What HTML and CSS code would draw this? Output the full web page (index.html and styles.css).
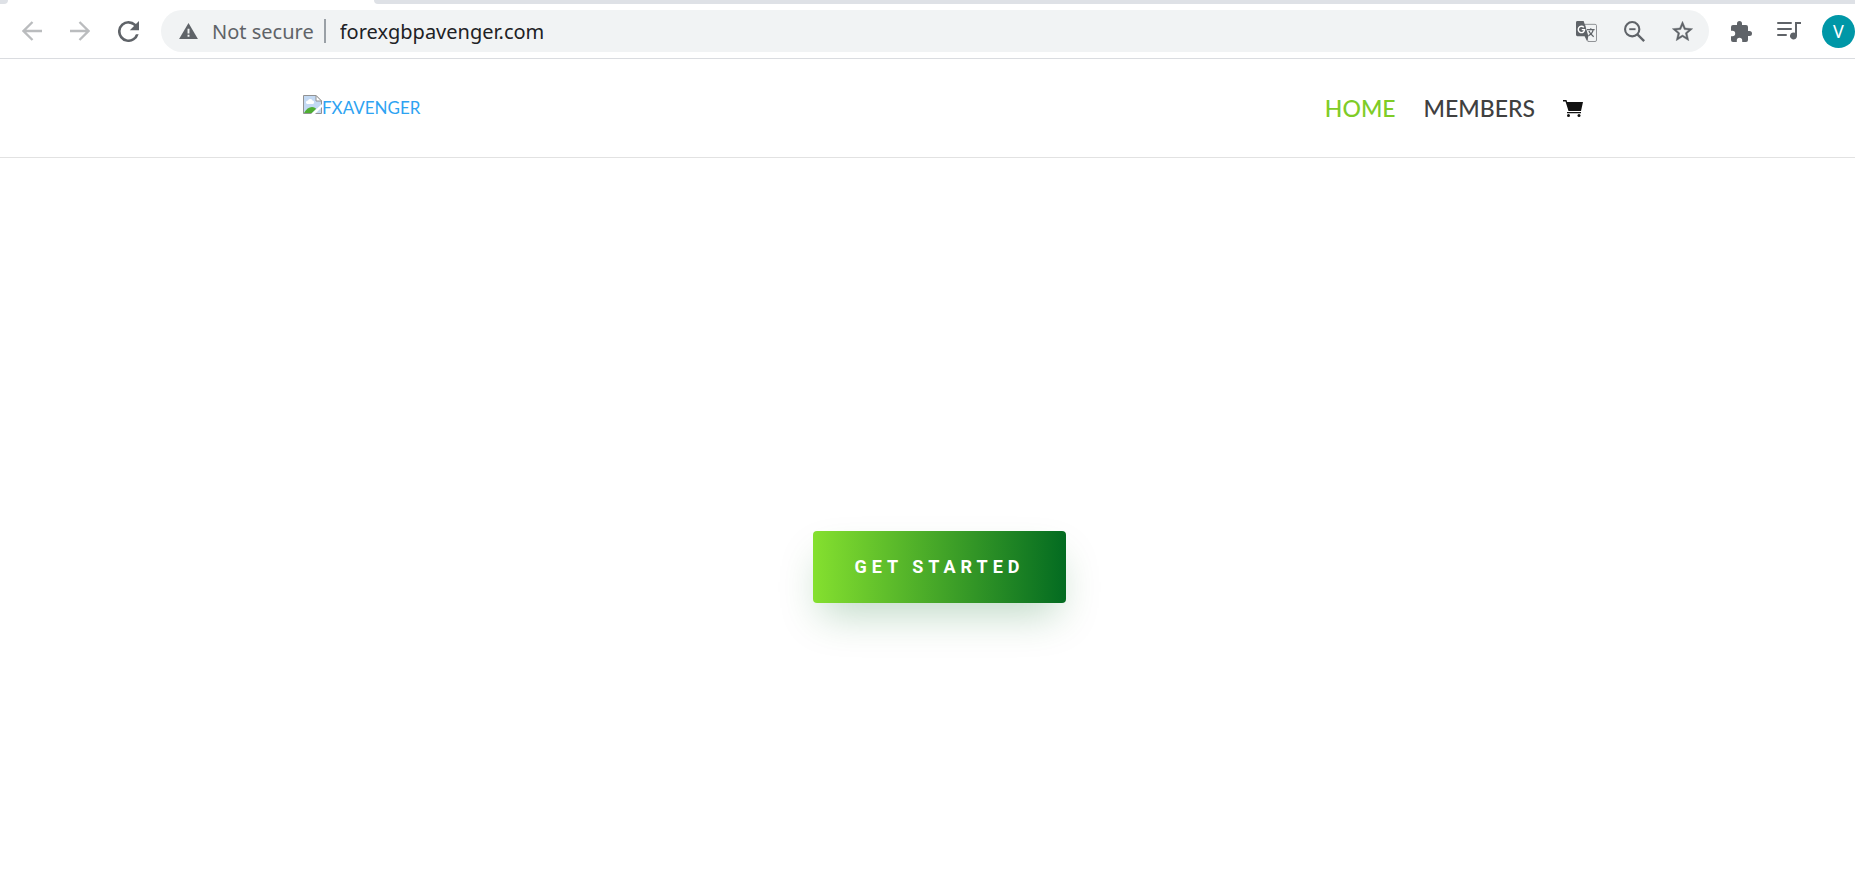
FILE: index.html
```
<!DOCTYPE html>
<html lang="en">
<head>
    <meta charset="UTF-8">
    <meta name="viewport" content="width=device-width, initial-scale=1.0">
    <title>FXAVENGER</title>
    <link rel="stylesheet" href="styles.css">
</head>
<body>
    <div class="browser">
        <div class="tabs">
            <div class="tab-before"></div>
            <div class="tab-after"></div>
        </div>
        <div class="toolbar">
            <div class="nav-buttons">
                <button class="icon-button faded" type="button" aria-label="Back">
                    <svg viewBox="0 0 20 20" fill="none" stroke="currentColor" stroke-width="2.300"><path d="M20 10H2M10.500 1L1.500 10l9 9"/></svg>
                </button>
                <button class="icon-button faded" type="button" aria-label="Forward">
                    <svg viewBox="0 0 20 20" fill="none" stroke="currentColor" stroke-width="2.300"><path d="M0 10h18M9.500 1l9 9-9 9"/></svg>
                </button>
                <button class="icon-button" type="button" aria-label="Reload">
                    <svg viewBox="4 4 16 16"><path fill="currentColor" d="M17.650 6.350A7.960 7.960 0 0 0 12 4a8 8 0 1 0 7.730 10h-2.080A6 6 0 1 1 12 6c1.660 0 3.140.690 4.220 1.780L13 11h7V4z"/></svg>
                </button>
            </div>
            <div class="address">
                <svg class="warning" viewBox="0 0 20 17"><path fill="#5f6368" d="M10 0l10 17H0z"/><path fill="#f1f3f4" d="M9 6h2v5H9zM9 12.500h2v2H9z"/></svg>
                <span class="not-secure">Not secure</span>
                <span class="divider"></span>
                <input class="url" type="text" aria-label="Address" value="forexgbpavenger.com">
                <div class="address-icons">
                    <button class="icon-button" type="button" aria-label="Translate">
                        <svg viewBox="0 0 22 22">
                            <path fill="#f1f3f4" stroke="#8a8d91" d="M9 3.500h11a1.500 1.500 0 0 1 1.500 1.500v15a1.500 1.500 0 0 1-1.500 1.500h-7.500z"/>
                            <path fill="currentColor" d="M1.500 0H8l1 3 4 13H1.500A1.500 1.500 0 0 1 0 14.500v-13A1.500 1.500 0 0 1 1.500 0zM9 16h4l-1.500 5z"/>
                            <path fill="none" stroke="#fff" stroke-width="1.500" d="M8.200 6.700A3.300 3.300 0 1 0 9 9H6"/>
                            <path fill="none" stroke="currentColor" stroke-width="1.300" d="M11.500 9h8M15.500 7.500V9M18 9c-.5 3-2.500 5-5 6.500M13.500 10.500c1 2.500 2.500 4 5 6"/>
                        </svg>
                    </button>
                    <button class="icon-button" type="button" aria-label="Zoom">
                        <svg viewBox="0 0 20 20" fill="none" stroke="currentColor" stroke-width="2"><circle cx="7.800" cy="7.800" r="6.800"/><path stroke-width="1.800" d="M5 7.800h6"/><path stroke-width="2.200" d="M12.500 12.500l6.700 6.700"/></svg>
                    </button>
                    <button class="icon-button" type="button" aria-label="Bookmark">
                        <svg viewBox="1.700 1.700 20.600 19.600"><path fill="currentColor" stroke="currentColor" stroke-width=".4" d="M22 9.240l-7.190-.620L12 2 9.190 8.630 2 9.240l5.460 4.730L5.820 21 12 17.270 18.180 21l-1.630-7.030zM12 15.400l-3.760 2.270 1-4.280-3.320-2.880 4.380-.380L12 6.100l1.710 4.040 4.380.380-3.320 2.880 1 4.280z"/></svg>
                    </button>
                </div>
            </div>
            <div class="extensions">
                <button class="icon-button" type="button" aria-label="Extensions">
                    <svg viewBox="2 1 21 21"><path fill="currentColor" d="M20.500 11H19V7a2 2 0 0 0-2-2h-4V3.500a2.500 2.500 0 0 0-5 0V5H4a2 2 0 0 0-1.990 2v3.800H3.500a2.700 2.700 0 0 1 0 5.400H2V20a2 2 0 0 0 2 2h3.800v-1.500a2.700 2.700 0 0 1 5.400 0V22H17a2 2 0 0 0 2-2v-4h1.500a2.500 2.500 0 0 0 0-5z"/></svg>
                </button>
                <button class="icon-button media" type="button" aria-label="Media">
                    <svg viewBox="0 0 24 18"><path fill="none" stroke="currentColor" stroke-width="2" stroke-linecap="round" d="M1 1h13M1 7h13M1 13h8"/><path fill="currentColor" d="M18 0h6v2h-4v12a3.500 3.500 0 1 1-2-3.200z"/></svg>
                </button>
                <button class="avatar" type="button">V</button>
            </div>
        </div>
    </div>

    <header class="site-header">
        <div class="container">
            <a class="logo" href="#">
                <svg viewBox="0 0 19 19">
                    <path fill="#c3d9f3" stroke="#929292" d="M.5 18.500V.500H13L18.500 6v12.500z"/>
                    <path fill="#fff" stroke="#929292" d="M13 .500V6h5.500z"/>
                    <path fill="#fff" d="M3 8a2 2 0 0 1 2-2.500 2.500 2.500 0 0 1 4.500 0A1.800 1.800 0 0 1 10 9H4z"/>
                    <path fill="#4fae32" d="M1 18c2-4 5-6 8-6 2 0 4 1 4 2l-4 4z"/>
                    <path fill="#fff" d="M8 19L19 9v3l-7 7z"/>
                </svg>
                <span>FXAVENGER</span>
            </a>
            <nav class="menu">
                <a class="active" href="#">HOME</a>
                <a href="#">MEMBERS</a>
                <a class="cart" href="#" aria-label="Cart">
                    <svg viewBox="0 0 20 17"><path fill="currentColor" d="M0 0h3.500l.600 2H20l-2 9H5.500L2.500 1.500H0zM4 12h14v1.300H4z"/><circle cx="5.500" cy="15.500" r="1.500" fill="currentColor"/><circle cx="16" cy="15.500" r="1.500" fill="currentColor"/></svg>
                </a>
            </nav>
        </div>
    </header>

    <main class="hero">
        <button class="cta" type="button">GET STARTED</button>
    </main>
</body>
</html>
```
FILE: styles.css
```
* {
    box-sizing: border-box;
}
body {
    margin: 0;
    min-height: 100vh;
    display: flex;
    flex-direction: column;
    background: #fff;
    font-family: Lato, sans-serif;
}
button {
    padding: 0;
    border: none;
    background: none;
    cursor: pointer;
}
svg {
    display: block;
}
a {
    text-decoration: none;
}

/* browser bar */
.browser {
    border-bottom: 1px solid #dadce0;
    font-family: "Noto Sans", sans-serif;
}
.tabs {
    display: flex;
    justify-content: space-between;
    height: 4px;
}
.tab-before {
    width: 8px;
    background: #dee1e6;
    border-bottom-right-radius: 8px;
}
.tab-after {
    width: calc(100% - 374px);
    background: #dee1e6;
    border-bottom-left-radius: 8px;
}
.toolbar {
    display: flex;
    align-items: center;
    height: 54px;
    padding-left: 22px;
}
.nav-buttons {
    display: flex;
    gap: 28px;
    margin-right: 22px;
}
.icon-button {
    width: 21px;
    color: #5f6368;
}
.icon-button svg {
    width: 100%;
}
.faded {
    width: 20px;
    color: #babcbe;
}
.address {
    flex: 1;
    display: flex;
    align-items: center;
    height: 42px;
    padding: 0 16px 0 18px;
    border-radius: 21px;
    background: #f1f3f4;
    font-size: 20px;
}
.warning {
    width: 19px;
    margin-right: 14px;
}
.not-secure {
    color: #5f6368;
}
.divider {
    width: 2px;
    height: 24px;
    margin: 0 14px 0 10px;
    background: #9aa0a6;
}
.url {
    flex: 1;
    min-width: 0;
    padding: 0;
    border: none;
    outline: none;
    background: none;
    color: #202124;
    font: inherit;
}
.address-icons {
    display: flex;
    align-items: center;
    gap: 27px;
}
.extensions {
    display: flex;
    align-items: center;
    gap: 25px;
    margin-left: 22px;
}
.media {
    width: 24px;
}
.avatar {
    width: 33px;
    height: 33px;
    margin-left: -4px;
    border-radius: 50%;
    background: #0097a7;
    color: #fff;
    font: 18px "Noto Sans", sans-serif;
}

/* site */
.site-header {
    padding-left: 31px;
    border-bottom: 1px solid #e2e2e2;
}
.container {
    display: flex;
    align-items: center;
    justify-content: space-between;
    max-width: 1280px;
    height: 98px;
    margin: 0 auto;
}
.logo {
    display: flex;
    align-items: baseline;
    padding-bottom: 4px;
    color: #2ea3f2;
    font-size: 17px;
}
.logo svg {
    width: 19px;
}
.menu {
    display: flex;
    align-items: center;
    gap: 28px;
    font-size: 23px;
    font-weight: 500;
}
.menu a {
    color: #404040;
}
.menu .active {
    color: #7fcc27;
}
.menu .cart {
    color: #111;
}
.cart svg {
    width: 20px;
}
.hero {
    flex: 1;
    display: flex;
    align-items: center;
    justify-content: center;
    padding: 100px 0 0 24px;
}
.cta {
    padding: 26px 41px;
    border-radius: 4px;
    background: linear-gradient(90deg, #85e02f, #036b21);
    box-shadow: 0 20px 40px -8px rgba(3, 107, 33, 0.25);
    color: #fff;
    font: bold 18px/20px Roboto, sans-serif;
    letter-spacing: 5px;
}
```
